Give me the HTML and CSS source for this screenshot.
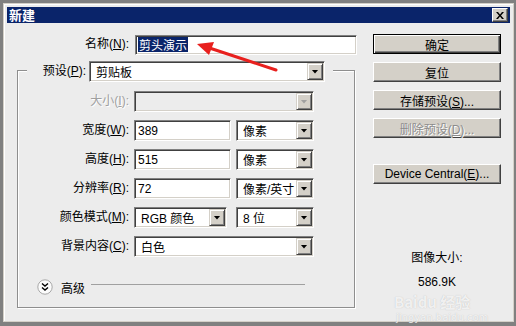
FILE: index.html
```html
<!DOCTYPE html>
<html>
<head>
    <meta charset="utf-8">
    <title>新建</title>
    <link rel="stylesheet" href="styles.css">
</head>
<body>
    <div class="window">
        <div class="titlebar">
            <span class="title">新建</span>
            <button class="close">
                <svg width="8" height="7" viewBox="0 0 8 7"><path d="M0 0h2l2 2.5L6 0h2L5 3.5 8 7H6L4 4.5 2 7H0l3-3.5z" fill="#000"/></svg>
            </button>
        </div>

        <div class="content">
            <div class="left">
                <div class="name-row">
                    <label class="lbl">名称(<u>N</u>):</label>
                    <div class="field name-field"><span class="sel">剪头演示</span></div>
                </div>

                <div class="group">
                    <div class="preset-row">
                        <label class="lbl">预设(<u>P</u>):</label>
                        <div class="field combo preset-combo"><span class="val">剪贴板</span><span class="drop"></span></div>
                    </div>

                    <div class="rows">
                        <label class="lbl disabled">大小(<u>I</u>):</label>
                        <div class="ctl"><div class="field combo wide disabled-combo"><span class="val"></span><span class="drop"></span></div></div>

                        <label class="lbl">宽度(<u>W</u>):</label>
                        <div class="ctl">
                            <div class="field input num">389</div>
                            <div class="field combo unit"><span class="val">像素</span><span class="drop"></span></div>
                        </div>

                        <label class="lbl">高度(<u>H</u>):</label>
                        <div class="ctl">
                            <div class="field input num">515</div>
                            <div class="field combo unit"><span class="val">像素</span><span class="drop"></span></div>
                        </div>

                        <label class="lbl">分辨率(<u>R</u>):</label>
                        <div class="ctl">
                            <div class="field input num">72</div>
                            <div class="field combo unit"><span class="val">像素/英寸</span><span class="drop"></span></div>
                        </div>

                        <label class="lbl">颜色模式(<u>M</u>):</label>
                        <div class="ctl">
                            <div class="field combo mode"><span class="val">RGB 颜色</span><span class="drop"></span></div>
                            <div class="field combo unit"><span class="val">8 位</span><span class="drop"></span></div>
                        </div>

                        <label class="lbl">背景内容(<u>C</u>):</label>
                        <div class="ctl"><div class="field combo wide"><span class="val">白色</span><span class="drop"></span></div></div>
                    </div>

                    <div class="advanced">
                        <svg width="16" height="16" viewBox="0 0 16 16">
                            <circle cx="8" cy="8" r="7.2" fill="#fbfbfb" stroke="#a8a8a8"/>
                            <path d="M5 4.5l3 2.5 3-2.5M5 8.5l3 2.5 3-2.5" fill="none" stroke="#000" stroke-width="1.4"/>
                        </svg>
                        <span class="adv-text">高级</span>
                        <span class="adv-line"></span>
                    </div>
                </div>
            </div>

            <div class="right">
                <button class="btn default">确定</button>
                <button class="btn">复位</button>
                <button class="btn">存储预设(<u>S</u>)...</button>
                <button class="btn disabled">删除预设(<u>D</u>)...</button>
                <button class="btn device">Device Central(<u>E</u>)...</button>
                <div class="size-info">
                    <div>图像大小:</div>
                    <div class="size-val">586.9K</div>
                </div>
            </div>
        </div>
    </div>

    <svg class="arrow" width="516" height="326" viewBox="0 0 516 326">
        <line x1="276" y1="70" x2="208" y2="47.5" stroke="#e8201e" stroke-width="3" stroke-linecap="round"/>
        <polygon points="197,44 214,42 209,55" fill="#e8201e"/>
    </svg>

    <div class="watermark">
        <div class="wm-big">Baidu 经验</div>
        <div class="wm-small">jingyan.baidu.com</div>
    </div>
</body>
</html>
```

FILE: styles.css
```css
* {
    box-sizing: border-box;
}

body {
    margin: 0;
    width: 516px;
    height: 326px;
    overflow: hidden;
    position: relative;
    background: #808080;
    font-family: "Liberation Sans", "Noto Sans CJK SC", sans-serif;
    font-size: 12px;
    color: #000;
}

u {
    text-decoration: underline;
    text-underline-offset: 1px;
}

.window {
    margin: 3px 0 0 3px;
    width: 511px;
    height: 319px;
    background: #ececec;
    border: 1px solid #d4d0c8;
    box-shadow: inset 1px 1px 0 #fff;
    padding: 3px;
    display: flex;
    flex-direction: column;
}

.titlebar {
    height: 16px;
    background: #0a246a;
    display: flex;
    align-items: center;
    justify-content: space-between;
    padding: 0 2px;
}

.title {
    color: #fff;
    font-family: "Noto Sans CJK SC", sans-serif;
    font-weight: bold;
    font-size: 13px;
    line-height: 16px;
}

.close {
    width: 16px;
    height: 14px;
    padding: 0;
    background: #d4d0c8;
    border: 1px solid;
    border-color: #fff #404040 #404040 #fff;
    box-shadow: inset -1px -1px 0 #808080;
    display: flex;
    align-items: center;
    justify-content: center;
}

.content {
    flex: 1;
    display: flex;
    padding: 11px 0 0 10px;
}

.left {
    width: 340px;
}

.lbl {
    text-align: right;
    line-height: 21px;
    white-space: nowrap;
}

.lbl.disabled {
    color: #a0a0a0;
    text-shadow: 1px 1px 0 #fff;
}

.field {
    height: 21px;
    background: #fff;
    border: 1px solid;
    border-color: #808080 #fff #fff #808080;
    box-shadow: inset 1px 1px 0 #404040, inset -1px -1px 0 #d4d0c8;
    display: flex;
    align-items: center;
    white-space: nowrap;
    overflow: hidden;
}

.name-row {
    display: flex;
    align-items: center;
    gap: 6px;
}

.name-row .lbl {
    width: 112px;
}

.name-field {
    width: 222px;
    height: 20px;
    padding-left: 2px;
}

.sel {
    background: #0a246a;
    color: #fff;
    font-family: "Noto Sans CJK SC", sans-serif;
    line-height: 15px;
    padding: 0 1px;
}

.group {
    width: 338px;
    margin-top: 15px;
    border: 1px solid #8e8e8e;
    box-shadow: 1px 1px 0 #fff, inset 1px 1px 0 #fff;
}

.preset-row {
    display: flex;
    align-items: center;
    width: 306px;
    margin: -10px 0 0 9px;
    padding: 0 8px 0 13px;
    background: #ececec;
}

.preset-row .lbl {
    flex: 1;
    margin-right: 3px;
}

.preset-combo {
    width: 236px;
}

.combo {
    padding: 0 1px 0 6px;
}

.combo .val {
    flex: 1;
    overflow: hidden;
}

.drop {
    width: 16px;
    height: 17px;
    flex: none;
    background: #d4d0c8;
    border: 1px solid;
    border-color: #d4d0c8 #404040 #404040 #d4d0c8;
    box-shadow: inset 1px 1px 0 #fff, inset -1px -1px 0 #808080;
    display: flex;
    align-items: center;
    justify-content: center;
}

.drop::after {
    content: "";
    width: 7px;
    height: 4px;
    background: #000;
    clip-path: polygon(0 0, 100% 0, 50% 100%);
}

.disabled-combo {
    background: #ececec;
}

.disabled-combo .drop::after {
    background: #a0a0a0;
}

.rows {
    display: grid;
    grid-template-columns: 111px 180px;
    column-gap: 5px;
    row-gap: 8px;
    margin-top: 9px;
}

.ctl {
    display: flex;
    justify-content: space-between;
}

.wide {
    width: 180px;
}

.num {
    width: 97px;
    padding-left: 3px;
}

.unit {
    width: 78px;
}

.mode {
    width: 93px;
}

.advanced {
    display: flex;
    align-items: center;
    height: 16px;
    margin: 22px 0 12px 19px;
}

.adv-text {
    margin-left: 8px;
}

.adv-line {
    flex: 1;
    height: 1px;
    background: #a0a0a0;
    margin: -5px 49px 0 6px;
}

.right {
    width: 128px;
    margin-left: 16px;
    display: flex;
    flex-direction: column;
}

.btn {
    width: 128px;
    height: 20px;
    margin-bottom: 8px;
    padding: 0;
    font-family: inherit;
    font-size: 12px;
    color: #000;
    background: #d4d0c8;
    border: 1px solid;
    border-color: #fff #404040 #404040 #fff;
    box-shadow: inset -1px -1px 0 #808080;
}

.btn.default {
    border: 1px solid #000;
    box-shadow: inset 1px 1px 0 #fff, inset -1px -1px 0 #404040, inset -2px -2px 0 #808080;
}

.btn.disabled {
    color: #8c8c8c;
    text-shadow: 1px 1px 0 #fff;
}

.btn.device {
    margin-top: 18px;
}

.size-info {
    margin-top: 58px;
    text-align: center;
    line-height: 16px;
}

.size-val {
    margin-top: 8px;
}

.arrow {
    position: absolute;
    left: 0;
    top: 0;
    pointer-events: none;
}

.watermark {
    position: absolute;
    left: 394px;
    top: 291px;
    color: rgba(255, 255, 255, 0.8);
    text-shadow: 0 0 1px rgba(150, 150, 150, 0.6);
    pointer-events: none;
}

.wm-big {
    font-family: "Noto Sans CJK SC", sans-serif;
    font-weight: bold;
    font-size: 15px;
}

.wm-small {
    font-family: "DejaVu Sans", sans-serif;
    font-size: 10px;
    margin-left: 2px;
}
```
